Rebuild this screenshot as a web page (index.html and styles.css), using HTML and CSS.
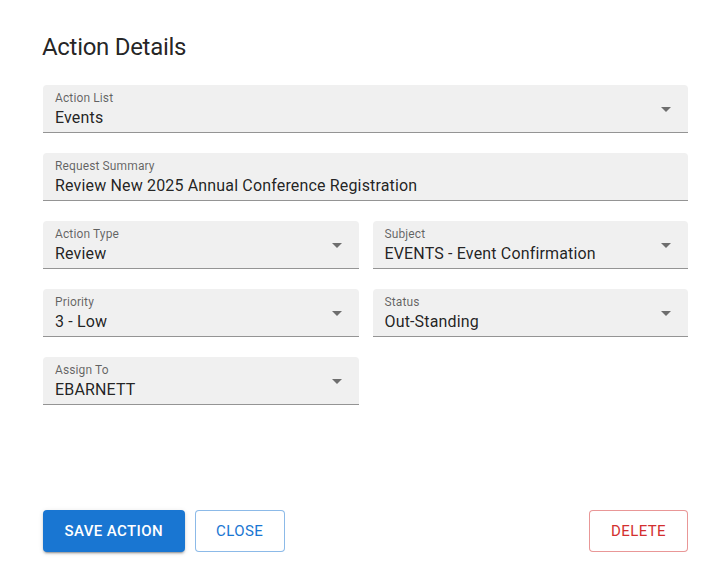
FILE: index.html
```html
<!DOCTYPE html>
<html lang="en">
<head>
<meta charset="utf-8">
<title>Action Details</title>
<link rel="stylesheet" href="styles.css">
</head>
<body>
<div class="dialog">
  <h2 class="title">Action Details</h2>
  <div class="fields">
    <div class="field">
      <div class="field-text">
        <div class="label">Action List</div>
        <div class="value">Events</div>
      </div>
      <svg class="arrow" viewBox="0 0 24 24" width="24" height="24"><path d="M7 10l5 5 5-5z"/></svg>
    </div>
    <div class="field">
      <div class="field-text">
        <div class="label">Request Summary</div>
        <div class="value">Review New 2025 Annual Conference Registration</div>
      </div>
    </div>
    <div class="row">
      <div class="field">
        <div class="field-text">
          <div class="label">Action Type</div>
          <div class="value">Review</div>
        </div>
        <svg class="arrow" viewBox="0 0 24 24" width="24" height="24"><path d="M7 10l5 5 5-5z"/></svg>
      </div>
      <div class="field">
        <div class="field-text">
          <div class="label">Subject</div>
          <div class="value">EVENTS - Event Confirmation</div>
        </div>
        <svg class="arrow" viewBox="0 0 24 24" width="24" height="24"><path d="M7 10l5 5 5-5z"/></svg>
      </div>
    </div>
    <div class="row">
      <div class="field">
        <div class="field-text">
          <div class="label">Priority</div>
          <div class="value">3 - Low</div>
        </div>
        <svg class="arrow" viewBox="0 0 24 24" width="24" height="24"><path d="M7 10l5 5 5-5z"/></svg>
      </div>
      <div class="field">
        <div class="field-text">
          <div class="label">Status</div>
          <div class="value">Out-Standing</div>
        </div>
        <svg class="arrow" viewBox="0 0 24 24" width="24" height="24"><path d="M7 10l5 5 5-5z"/></svg>
      </div>
    </div>
    <div class="row">
      <div class="field">
        <div class="field-text">
          <div class="label">Assign To</div>
          <div class="value">EBARNETT</div>
        </div>
        <svg class="arrow" viewBox="0 0 24 24" width="24" height="24"><path d="M7 10l5 5 5-5z"/></svg>
      </div>
    </div>
  </div>
  <div class="actions">
    <button class="btn btn-primary">Save Action</button>
    <button class="btn btn-outline">Close</button>
    <button class="btn btn-danger">Delete</button>
  </div>
</div>
</body>
</html>
```

FILE: styles.css
```css
* { box-sizing: border-box; }
html, body { margin: 0; padding: 0; background: #fff; }
body {
  font-family: Roboto, "Liberation Sans", Arial, sans-serif;
  color: rgba(0,0,0,0.87);
}
.dialog {
  min-height: 586px;
  height: 100vh;
  display: flex;
  flex-direction: column;
  padding: 31px 39px 34px 43px;
}
.title {
  margin: 0 0 0 -1px;
  font-size: 24px;
  font-weight: 400;
  line-height: 32px;
  letter-spacing: -0.3px;
  color: rgba(0,0,0,0.87);
}
.fields {
  margin-top: 22px;
  display: flex;
  flex-direction: column;
  gap: 20px;
}
.row {
  display: grid;
  grid-template-columns: 1fr 1fr;
  gap: 14px;
}
.field {
  height: 48px;
  display: flex;
  align-items: flex-start;
  background: #f0f0f0;
  border-radius: 4px 4px 0 0;
  border-bottom: 1px solid #949494;
  padding: 5px 12px 2px;
}
.field-text { flex: 1; min-width: 0; }
.label {
  font-size: 12px;
  line-height: 16px;
  color: rgba(0,0,0,0.6);
  letter-spacing: 0.01em;
}
.value {
  font-size: 16px;
  line-height: 24px;
  color: rgba(0,0,0,0.87);
  letter-spacing: 0.01em;
  white-space: nowrap;
}
.arrow {
  flex: none;
  margin-top: 7px;
  margin-right: -2px;
  fill: rgba(0,0,0,0.54);
}
.actions {
  margin-top: auto;
  display: flex;
  gap: 10px;
}
.btn {
  font-family: Roboto, "Liberation Sans", Arial, sans-serif;
  font-size: 15px;
  font-weight: 500;
  line-height: 26px;
  letter-spacing: 0.4px;
  text-transform: uppercase;
  border-radius: 4px;
  cursor: pointer;
  background: #fff;
}
.btn-primary {
  background: #1976d2;
  color: #fff;
  border: none;
  padding: 8px 21.5px;
  box-shadow: 0px 3px 1px -2px rgba(0,0,0,0.2), 0px 2px 2px 0px rgba(0,0,0,0.14), 0px 1px 5px 0px rgba(0,0,0,0.12);
}
.btn-outline {
  font-weight: 400;
  color: #1976d2;
  border: 1px solid rgba(25,118,210,0.5);
  padding: 7px 20.5px;
}
.btn-danger {
  font-weight: 400;
  margin-left: auto;
  color: #d32f2f;
  border: 1px solid rgba(211,47,47,0.5);
  padding: 7px 21px;
}
```
